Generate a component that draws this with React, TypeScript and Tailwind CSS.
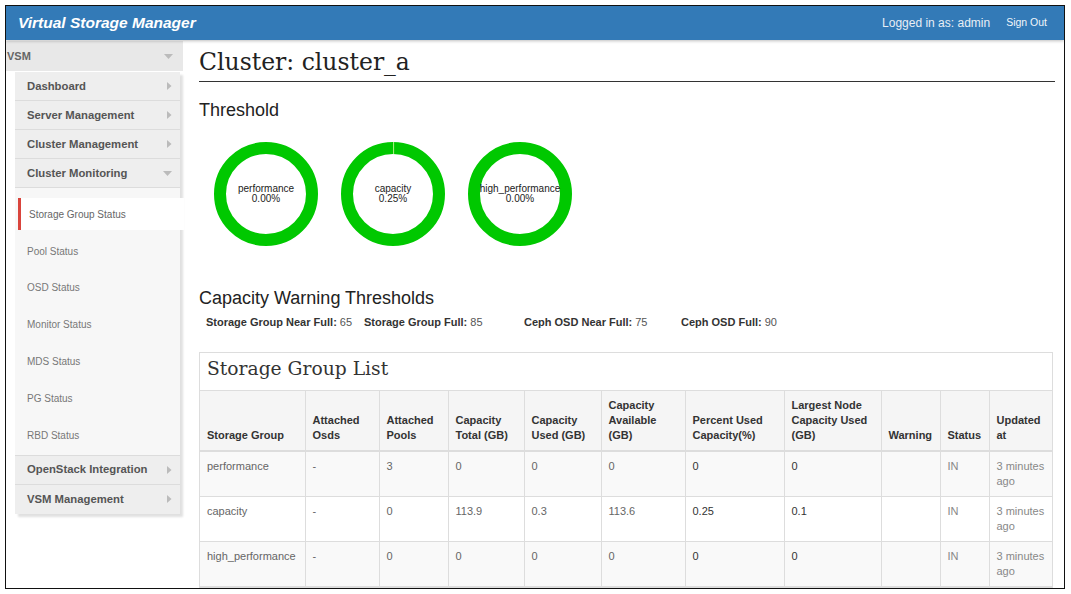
import React from 'react';

const sans = { fontFamily: '"Liberation Sans", Arial, sans-serif' };

function CaretRight() {
  return (
    <svg width="5" height="8" viewBox="0 0 5 8" className="shrink-0">
      <path d="M0 0 L4.5 4 L0 8 Z" fill="#bbb" />
    </svg>
  );
}

function CaretDown() {
  return (
    <svg width="9" height="5" viewBox="0 0 9 5" className="shrink-0">
      <path d="M0 0 L9 0 L4.5 5 Z" fill="#bbb" />
    </svg>
  );
}

function Donut({ label, value, used }: { label: string; value: string; used?: boolean }) {
  return (
    <div className="relative w-[104px] h-[104px]">
      <svg width="104" height="104" viewBox="0 0 104 104" className="absolute inset-0">
        <circle cx="52" cy="52" r="46" fill="none" stroke="#00c800" strokeWidth="12" />
        {used && <line x1="52.6" y1="0" x2="52.6" y2="12" stroke="#b8f28a" strokeWidth="1" />}
      </svg>
      <div className="absolute inset-0 flex flex-col items-center justify-center text-[10px] leading-[9.5px] text-[#222] pb-[1px]">
        <span>{label}</span>
        <span>{value}</span>
      </div>
    </div>
  );
}

const topItems = ['Dashboard', 'Server Management', 'Cluster Management', 'Cluster Monitoring'];
const subItems = ['Storage Group Status', 'Pool Status', 'OSD Status', 'Monitor Status', 'MDS Status', 'PG Status', 'RBD Status'];

const columns: { label: React.ReactNode; width: number }[] = [
  { label: 'Storage Group', width: 105 },
  { label: <>Attached<br />Osds</>, width: 74 },
  { label: <>Attached<br />Pools</>, width: 69 },
  { label: <>Capacity<br />Total (GB)</>, width: 76 },
  { label: <>Capacity<br />Used (GB)</>, width: 77 },
  { label: <>Capacity<br />Available<br />(GB)</>, width: 84 },
  { label: <>Percent Used<br />Capacity(%)</>, width: 99 },
  { label: <>Largest Node<br />Capacity Used<br />(GB)</>, width: 97 },
  { label: 'Warning', width: 59 },
  { label: 'Status', width: 49 },
  { label: <>Updated<br />at</>, width: 63 },
];

const rows = [
  ['performance', '-', '3', '0', '0', '0', '0', '0', '', 'IN'],
  ['capacity', '-', '0', '113.9', '0.3', '113.6', '0.25', '0.1', '', 'IN'],
  ['high_performance', '-', '0', '0', '0', '0', '0', '0', '', 'IN'],
];

export default function App() {
  return (
    <div className="w-[1071px] h-[594px] bg-white pl-[5px] pt-[5px]" style={sans}>
      <div className="w-[1060px] h-[584px] border border-[#111] overflow-hidden flex flex-col">
        {/* top bar */}
        <div className="h-[34px] shrink-0 bg-[#337ab7] flex items-center justify-between pl-[12px] pr-[17px] shadow-[0_1px_3px_rgba(0,0,0,0.25)] relative z-10">
          <span className="text-white font-bold italic text-[15.5px]">Virtual Storage Manager</span>
          <div className="flex items-center gap-[16px]">
            <span className="text-[#e8eef5] text-[12px]">Logged in as: admin</span>
            <span className="text-[#f2f6fa] text-[10.5px]">Sign Out</span>
          </div>
        </div>

        <div className="flex flex-1 min-h-0">
          {/* sidebar */}
          <div className="w-[177px] shrink-0 pt-[1px]">
            <div className="h-[30px] bg-[#e8e8e8] flex items-center justify-between pl-[1px] pr-[10px]">
              <span className="text-[11px] font-bold text-[#666]">VSM</span>
              <CaretDown />
            </div>
            <div className="ml-[9px] w-[165px] mt-[1px] shadow-[3px_3px_2px_rgba(0,0,0,0.12)]">
              {topItems.map((t) => (
                <div key={t} className="h-[29px] bg-[#eeeeee] border-b border-[#dcdcdc] flex items-center justify-between pl-[12px] pr-[8px]">
                  <span className="text-[11.3px] font-bold text-[#555]">{t}</span>
                  {t === 'Cluster Monitoring' ? <CaretDown /> : <CaretRight />}
                </div>
              ))}
              <div className="bg-[#f7f7f7] pt-[8px] pb-[1px]">
                {subItems.map((s, i) => (
                  <div key={s} className="h-[36.8px] flex items-center">
                    {i === 0 ? (
                      <div className="ml-[3px] mr-[-4px] flex-1 h-[32px] bg-white border-l-[3px] border-[#d9443c] flex items-center pl-[8px]">
                        <span className="text-[10px] text-[#666]">{s}</span>
                      </div>
                    ) : (
                      <span className="pl-[12px] text-[10px] text-[#777]">{s}</span>
                    )}
                  </div>
                ))}
              </div>
              {['OpenStack Integration', 'VSM Management'].map((t) => (
                <div key={t} className="h-[29.5px] bg-[#eeeeee] border-t border-[#dcdcdc] flex items-center justify-between pl-[12px] pr-[8px]">
                  <span className="text-[11.3px] font-bold text-[#555]">{t}</span>
                  <CaretRight />
                </div>
              ))}
            </div>
          </div>

          {/* main */}
          <div className="flex-1 min-w-0 pl-[16px] pr-[9px] pt-[8px]">
            <h1 className="text-[23.5px] leading-[28px] text-[#222]" style={{ fontFamily: '"DejaVu Serif", serif' }}>
              Cluster: cluster_a
            </h1>
            <div className="mt-[5px] border-t border-[#333]" />
            <h2 className="mt-[17px] text-[18px] leading-[22px] text-[#222]">Threshold</h2>
            <div className="mt-[21px] ml-[15px] flex gap-[23px]">
              <Donut label="performance" value="0.00%" />
              <Donut label="capacity" value="0.25%" used />
              <Donut label="high_performance" value="0.00%" />
            </div>
            <h2 className="mt-[41px] text-[18px] leading-[22px] text-[#222]">Capacity Warning Thresholds</h2>
            <div className="mt-[6px] ml-[7px] flex text-[11px] leading-[15px] text-[#555]">
              <span className="w-[158px]"><b className="text-[#333]">Storage Group Near Full:</b> 65</span>
              <span className="w-[160px]"><b className="text-[#333]">Storage Group Full:</b> 85</span>
              <span className="w-[157px]"><b className="text-[#333]">Ceph OSD Near Full:</b> 75</span>
              <span><b className="text-[#333]">Ceph OSD Full:</b> 90</span>
            </div>

            <div className="mt-[22px] mr-[2px] border border-[#dddddd]">
              <div className="h-[37px] pt-[4px] pl-[7px]">
                <span className="text-[18.7px] leading-[24px] text-[#333]" style={{ fontFamily: '"DejaVu Serif", serif' }}>
                  Storage Group List
                </span>
              </div>
              <table className="w-full table-fixed border-collapse text-[11px] leading-[15px]">
                <colgroup>
                  {columns.map((c, i) => (
                    <col key={i} style={{ width: c.width }} />
                  ))}
                </colgroup>
                <thead>
                  <tr className="bg-[#f5f5f5]">
                    {columns.map((c, i) => (
                      <th
                        key={i}
                        className={`align-bottom text-left font-bold text-[#333] px-[7px] py-[7px] border-t border-b-2 border-[#dddddd] ${i > 0 ? 'border-l' : ''}`}
                      >
                        {c.label}
                      </th>
                    ))}
                  </tr>
                </thead>
                <tbody>
                  {rows.map((r, ri) => (
                    <tr key={ri} className={ri % 2 === 0 ? 'bg-[#f9f9f9]' : 'bg-white'}>
                      {r.map((v, ci) => (
                        <td
                          key={ci}
                          className={`align-top px-[7px] py-[7px] border-b border-[#dddddd] ${ci > 0 ? 'border-l' : ''} ${ci === 6 || ci === 7 ? 'text-[#333]' : ci >= 9 ? 'text-[#888]' : 'text-[#666]'}`}
                        >
                          {v}
                        </td>
                      ))}
                      <td className="align-top px-[7px] py-[7px] border-b border-l border-[#dddddd] text-[#888]">
                        3 minutes<br />ago
                      </td>
                    </tr>
                  ))}
                </tbody>
              </table>
            </div>
          </div>
        </div>
      </div>
    </div>
  );
}
